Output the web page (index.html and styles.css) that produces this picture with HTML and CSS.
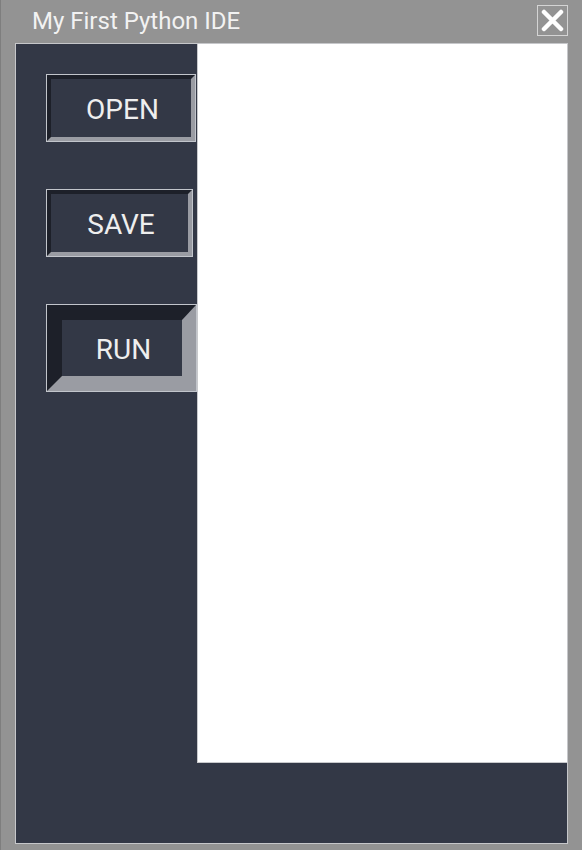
FILE: index.html
```html
<!DOCTYPE html>
<html>
<head>
<meta charset="utf-8">
<link rel="stylesheet" href="styles.css">
</head>
<body>
<div class="window">
  <div class="titlebar">
    <span class="title">My First Python IDE</span>
    <div class="close">
      <svg width="23" height="23" viewBox="0 0 23 23"><path d="M3 3 L20 20 M20 3 L3 20" stroke="#ffffff" stroke-width="4.5" stroke-linecap="round"/></svg>
    </div>
  </div>
  <div class="main">
    <div class="sidebar">
      <div class="btn btn-open"><div class="bevel">OPEN</div></div>
      <div class="btn btn-save"><div class="bevel">SAVE</div></div>
      <div class="btn btn-run"><div class="bevel thick">RUN</div></div>
    </div>
    <div class="editor"></div>
  </div>
</div>
</body>
</html>
```

FILE: styles.css
```css
html, body {
  margin: 0;
  padding: 0;
  background: #939393;
  font-family: Roboto, "Liberation Sans", sans-serif;
}
.window {
  width: 582px;
  height: 850px;
  display: flex;
  flex-direction: column;
  box-sizing: border-box;
  border-left: 1px solid #7e7e7e;
}
.titlebar {
  height: 43px;
  display: flex;
  align-items: flex-start;
  justify-content: space-between;
  box-sizing: border-box;
}
.title {
  color: #f2f2f2;
  font-size: 24px;
  line-height: 24px;
  margin-left: 31px;
  margin-top: 9px;
}
.close {
  width: 31px;
  height: 31px;
  box-sizing: border-box;
  border: 1px solid #d4d4d4;
  margin-top: 5px;
  margin-right: 14px;
  display: flex;
  align-items: center;
  justify-content: center;
}
.main {
  margin-left: 14px;
  width: 553px;
  height: 801px;
  box-sizing: border-box;
  border: 1px solid #c6c7ca;
  background: #333846;
  display: flex;
  align-items: flex-start;
}
.sidebar {
  width: 181px;
  flex: none;
  padding-left: 30px;
  padding-top: 30px;
  box-sizing: border-box;
  display: flex;
  flex-direction: column;
  gap: 47px;
  position: relative;
  z-index: 1;
}
.btn {
  box-sizing: border-box;
  border: 1px solid #c2c5cb;
  height: 68px;
  display: flex;
}
.btn-open { width: 150px; }
.btn-save { width: 147px; }
.btn-run { width: 151px; height: 88px; }
.bevel {
  flex: 1;
  box-sizing: border-box;
  border-style: solid;
  border-width: 4px;
  border-color: #1d2029 #9a9ca3 #9a9ca3 #1d2029;
  background: #333846;
  color: #eeeeee;
  font-size: 28px;
  padding-top: 3px;
  padding-left: 3px;
  display: flex;
  align-items: center;
  justify-content: center;
}
.bevel.thick {
  border-width: 15px 14px 15px 15px;
}
.editor {
  width: 371px;
  height: 719px;
  box-sizing: border-box;
  background: #ffffff;
  border-left: 1px solid #c8c9cc;
  border-bottom: 1px solid #c8c9cc;
}
```
